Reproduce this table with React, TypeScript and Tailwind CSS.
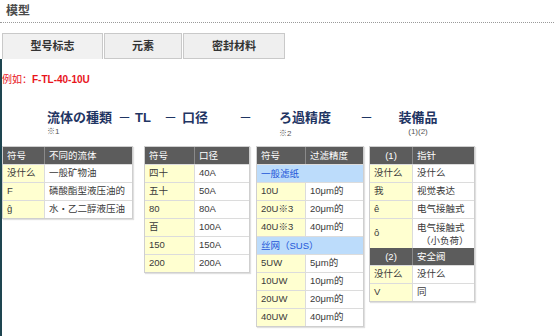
import React from "react";

type Row =
  | { kind: "row"; sym: string; val: React.ReactNode; h?: string }
  | { kind: "band"; text: string }
  | { kind: "head"; sym: string; val: string; center?: boolean };

const fluid: Row[] = [
  { kind: "head", sym: "符号", val: "不同的流体" },
  { kind: "row", sym: "没什么", val: "一般矿物油" },
  { kind: "row", sym: "F", val: "磷酸酯型液压油的" },
  { kind: "row", sym: "ĝ", val: "水・乙二醇液压油" },
];

const bore: Row[] = [
  { kind: "head", sym: "符号", val: "口径" },
  { kind: "row", sym: "四十", val: "40A" },
  { kind: "row", sym: "五十", val: "50A" },
  { kind: "row", sym: "80", val: "80A" },
  { kind: "row", sym: "百", val: "100A" },
  { kind: "row", sym: "150", val: "150A" },
  { kind: "row", sym: "200", val: "200A" },
];

const filter: Row[] = [
  { kind: "head", sym: "符号", val: "过滤精度" },
  { kind: "band", text: "一般滤纸" },
  { kind: "row", sym: "10U", val: "10μm的" },
  { kind: "row", sym: "20U※3", val: "20μm的" },
  { kind: "row", sym: "40U※3", val: "40μm的" },
  { kind: "band", text: "丝网（SUS）" },
  { kind: "row", sym: "5UW", val: "5μm的" },
  { kind: "row", sym: "10UW", val: "10μm的" },
  { kind: "row", sym: "20UW", val: "20μm的" },
  { kind: "row", sym: "40UW", val: "40μm的" },
];

const equip: Row[] = [
  { kind: "head", sym: "(1)", val: "指针", center: true },
  { kind: "row", sym: "没什么", val: "没什么" },
  { kind: "row", sym: "我", val: "视觉表达" },
  { kind: "row", sym: "ê", val: "电气接触式" },
  {
    kind: "row",
    sym: "ô",
    h: "h-[30px]",
    val: (
      <span className="block leading-[13px]">
        电气接触式
        <br />
        <span className="pl-[4px]">（小负荷）</span>
      </span>
    ),
  },
  { kind: "head", sym: "(2)", val: "安全阀", center: true },
  { kind: "row", sym: "没什么", val: "没什么" },
  { kind: "row", sym: "V", val: "同" },
];

function Table({ rows, c1, className }: { rows: Row[]; c1: string; className?: string }) {
  return (
    <div className={`border border-[#cfcfcf] shadow-[1px_1px_1px_rgba(0,0,0,0.12)] bg-white ${className ?? ""}`}>
      {rows.map((r, i) => {
        if (r.kind === "head")
          return (
            <div key={i} className="flex h-[17px] bg-[#5c5c5c] text-white text-[9.5px] leading-[17px]">
              <div className={`${c1} shrink-0 border-r border-[#8a8a8a] ${r.center ? "text-center" : "pl-[4px]"}`}>{r.sym}</div>
              <div className="flex-1 pl-[4px]">{r.val}</div>
            </div>
          );
        if (r.kind === "band")
          return (
            <div key={i} className="h-[18px] bg-[#bcdcfb] text-[#2356d8] text-[9.5px] leading-[18px] pl-[4px] border-t border-[#dcdcdc]">
              {r.text}
            </div>
          );
        return (
          <div key={i} className={`flex ${r.h ?? "h-[18px]"} border-t border-[#dcdcdc] text-[9.5px] text-[#3a3a3a]`}>
            <div className={`${c1} shrink-0 bg-[#ffffd0] border-r border-[#dcdcdc] pl-[4px] flex items-center`}>{r.sym}</div>
            <div className="flex-1 pl-[4px] flex items-center whitespace-nowrap">{r.val}</div>
          </div>
        );
      })}
    </div>
  );
}

function Head({ w, text, note, dash }: { w: string; text: string; note?: string; dash?: boolean }) {
  return (
    <div className={`${w} shrink-0 flex flex-col`}>
      <div className={`text-[13px] leading-[16px] text-[#1f3563] whitespace-nowrap ${dash ? "font-normal" : "font-bold"}`}>{text}</div>
      {note && <div className="text-[8px] leading-[10px] mt-[1px] text-[#555] whitespace-nowrap">{note}</div>}
    </div>
  );
}

export default function App() {
  return (
    <div
      className="w-[554px] h-[336px] overflow-hidden bg-white"
      style={{ fontFamily: '"Liberation Sans", "Noto Sans CJK SC", sans-serif' }}
    >
      <div className="h-[23px] pl-[6px] text-[12px] font-bold leading-[22px] text-[#4a4a4a] border-b border-dotted border-[#9a9a9a]">
        模型
      </div>

      <div className="flex gap-[1px] pl-[2px] mt-[10px] h-[26px]">
        <div className="w-[101px] h-[26px] bg-[#f1f1f1] border border-b-0 border-[#c9c9c9] text-[11px] font-bold text-[#333] flex items-center justify-center">
          型号标志
        </div>
        <div className="w-[78px] h-[26px] bg-[#efefef] border border-[#c9c9c9] text-[11px] font-bold text-[#333] flex items-center justify-center">
          元素
        </div>
        <div className="w-[102px] h-[26px] bg-[#efefef] border border-[#c9c9c9] text-[11px] font-bold text-[#333] flex items-center justify-center">
          密封材料
        </div>
      </div>

      <div className="border-l-2 border-[#1e4550] h-[277px]">
        <div className="pt-[15px] text-[10px] leading-[12px] text-[#e8141c]">
          例如：<span className="font-bold">F-TL-40-10U</span>
        </div>

        <div className="flex items-start mt-[24px] h-[36px] pl-[45px]">
          <Head w="w-[71px]" text="流体の種類" note="※1" />
          <Head w="w-[17px]" text="－" dash />
          <Head w="w-[29px]" text="TL" />
          <Head w="w-[18px]" text="－" dash />
          <Head w="w-[57px]" text="口径" />
          <Head w="w-[40px]" text="－" dash />
          <div className="w-[81px] shrink-0 flex flex-col">
            <div className="text-[13px] font-bold leading-[16px] text-[#1f3563]">ろ過精度</div>
            <div className="text-[8px] leading-[10px] mt-[3px] text-[#555]">※2</div>
          </div>
          <Head w="w-[38px]" text="－" dash />
          <div className="w-[40px] shrink-0 flex flex-col items-center">
            <div className="text-[13px] font-bold leading-[16px] text-[#1f3563] whitespace-nowrap">装備品</div>
            <div className="text-[8px] leading-[10px] mt-[1px] text-[#555] whitespace-nowrap">(1)(2)</div>
          </div>
        </div>

        <div className="flex items-start">
          <Table rows={fluid} c1="w-[42px]" className="w-[131px]" />
          <Table rows={bore} c1="w-[50px]" className="w-[106px] ml-[11px]" />
          <Table rows={filter} c1="w-[49px]" className="w-[108px] ml-[6px]" />
          <Table rows={equip} c1="w-[43px]" className="w-[106px] ml-[5px]" />
        </div>
      </div>
    </div>
  );
}
